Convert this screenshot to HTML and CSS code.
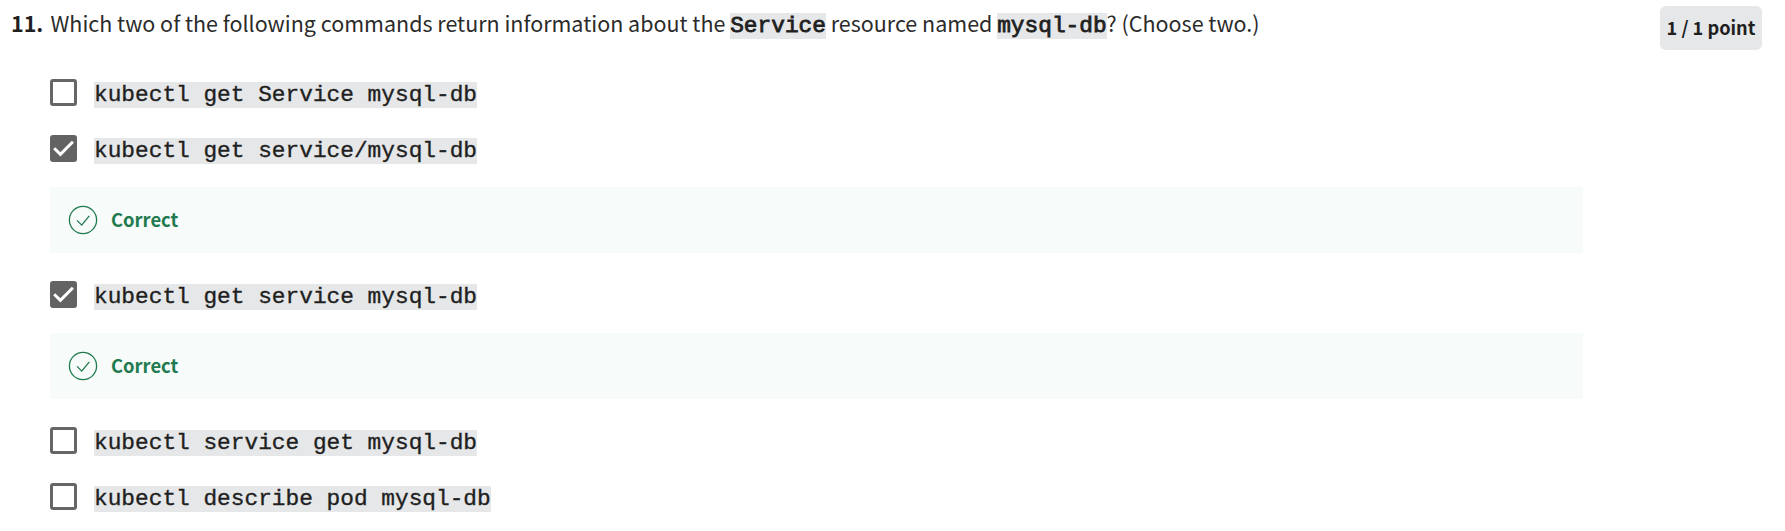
FILE: index.html
```html
<!DOCTYPE html>
<html lang="en">
<head>
<meta charset="utf-8">
<title>Quiz question 11</title>
<link rel="stylesheet" href="styles.css">
</head>
<body>
<main class="question">
  <header class="head">
    <span class="number">11.</span>
    <p class="prompt">Which two of the following commands return information about the <code class="term">Service</code> resource named <code class="term">mysql-db</code>? (Choose two.)</p>
    <span class="points">1 / 1 point</span>
  </header>
  <section class="options">
    <label class="option"><span class="box"></span><code class="command">kubectl get Service mysql-db</code></label>
    <label class="option"><span class="box checked"><svg class="tick" viewBox="0 0 27 27"><path d="M4.2 13.2l6.2 6.2L22.9 6.8"/></svg></span><code class="command">kubectl get service/mysql-db</code></label>
    <div class="feedback"><svg class="mark" viewBox="0 0 30 30"><circle cx="15" cy="15" r="13.6"/><path d="M9 15.4l4.7 4.7 7.6-9.3"/></svg><span class="verdict">Correct</span></div>
    <label class="option"><span class="box checked"><svg class="tick" viewBox="0 0 27 27"><path d="M4.2 13.2l6.2 6.2L22.9 6.8"/></svg></span><code class="command">kubectl get service mysql-db</code></label>
    <div class="feedback"><svg class="mark" viewBox="0 0 30 30"><circle cx="15" cy="15" r="13.6"/><path d="M9 15.4l4.7 4.7 7.6-9.3"/></svg><span class="verdict">Correct</span></div>
    <label class="option"><span class="box"></span><code class="command">kubectl service get mysql-db</code></label>
    <label class="option"><span class="box"></span><code class="command">kubectl describe pod mysql-db</code></label>
  </section>
</main>
</body>
</html>
```
FILE: styles.css
```css
* { box-sizing: border-box; }
body {
  margin: 0;
  background: #fff;
  color: #1f1f1f;
  font-family: "Noto Sans CJK SC", "Open Sans", sans-serif;
}
.question { padding: 6px 23px 0 11px; }
.head { display: flex; align-items: flex-start; height: 73px; }
.number { width: 39.5px; font-size: 21.5px; font-weight: 700; line-height: 33px; }
.prompt { flex: 1; margin: 0; color: #2b2b2b; font-size: 21.47px; line-height: 33px; white-space: nowrap; }
.term, .command {
  background: #e5e7e8;
  color: #1f1f1f;
  font-family: "Courier New", "Liberation Mono", monospace;
  font-size: 22.8px;
}
.term { line-height: 1; -webkit-text-stroke: 0.8px currentColor; }
.command {
  height: 26px;
  margin-top: 3px;
  line-height: 26px;
  white-space: pre;
  -webkit-text-stroke: 0.35px currentColor;
}
.points {
  width: 102px;
  height: 44px;
  border-radius: 6px;
  background: #e5e7e8;
  font-size: 18.2px;
  font-weight: 700;
  line-height: 42px;
  text-align: center;
  white-space: nowrap;
}
.options { padding-left: 39px; width: 1572px; }
.option { display: flex; align-items: flex-start; gap: 17px; height: 56px; }
.box {
  display: block;
  width: 27px;
  height: 27px;
  border: 3px solid #666;
  border-radius: 3px;
}
.checked { border: 0; background: #636363; }
.tick { display: block; width: 27px; height: 27px; fill: none; stroke: #fff; stroke-width: 3; }
.feedback {
  display: flex;
  align-items: center;
  gap: 13px;
  height: 66px;
  margin: -4px 0 28px;
  padding-left: 18px;
  background: #f7fbf9;
  color: #1f7a4f;
}
.mark { width: 30px; height: 30px; fill: none; stroke: currentColor; stroke-width: 1.3; }
.verdict { padding-bottom: 2px; font-size: 18.4px; font-weight: 700; line-height: 28px; }
```
